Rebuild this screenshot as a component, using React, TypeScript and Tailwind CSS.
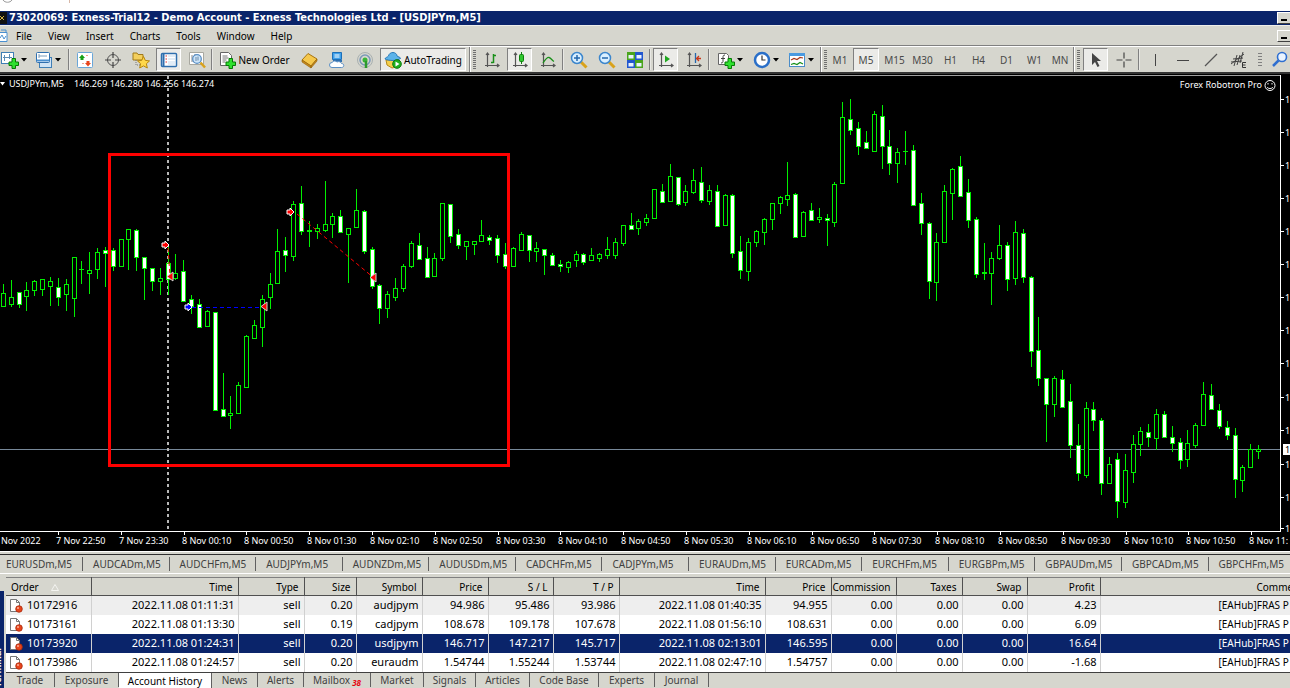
import type { ReactNode } from "react";

// high, body top, body bottom, low, 1 = bearish (filled)
const candles: number[][] = [
  [284, 293, 306, 306, 0], [280, 297, 304, 306, 0], [292, 292, 304, 307, 1], [282, 290, 296, 310, 0],
  [280, 281, 290, 295, 0], [279, 279, 289, 295, 0], [277, 281, 286, 305, 0], [278, 287, 297, 305, 1],
  [279, 284, 294, 310, 0], [257, 257, 298, 316, 0], [261, 269, 269, 283, 0], [252, 270, 273, 293, 0],
  [248, 252, 269, 278, 0], [247, 250, 253, 286, 1], [248, 250, 266, 270, 1], [239, 239, 266, 266, 0],
  [229, 229, 239, 269, 0], [229, 230, 257, 270, 1], [257, 257, 268, 299, 1], [268, 268, 281, 290, 1],
  [268, 278, 281, 294, 0], [247, 263, 279, 294, 1], [254, 273, 278, 279, 0], [260, 271, 301, 301, 1],
  [295, 299, 306, 313, 1], [299, 304, 327, 327, 1], [310, 311, 326, 326, 0], [312, 312, 410, 410, 1],
  [373, 409, 416, 416, 1], [396, 413, 415, 428, 0], [382, 385, 413, 413, 0], [335, 336, 387, 387, 0],
  [320, 325, 338, 338, 0], [295, 299, 327, 346, 0], [273, 284, 297, 308, 0], [229, 251, 283, 283, 0],
  [237, 250, 255, 271, 1], [201, 204, 256, 260, 0], [186, 203, 231, 234, 1], [221, 230, 231, 246, 0],
  [224, 228, 231, 238, 0], [181, 224, 230, 231, 0], [213, 216, 224, 237, 0], [210, 216, 232, 232, 1],
  [228, 228, 234, 282, 0], [189, 210, 227, 227, 0], [210, 211, 251, 253, 1], [247, 249, 286, 288, 1],
  [284, 285, 308, 323, 1], [291, 294, 308, 317, 0], [278, 288, 297, 300, 0], [264, 266, 288, 291, 0],
  [241, 243, 266, 267, 0], [233, 245, 259, 259, 1], [247, 258, 277, 277, 1], [253, 258, 276, 276, 0],
  [203, 203, 258, 260, 0], [204, 204, 236, 242, 1], [229, 234, 245, 248, 1], [241, 241, 246, 259, 0],
  [241, 241, 244, 254, 0], [220, 235, 241, 241, 0], [235, 237, 240, 244, 1], [235, 238, 255, 262, 1],
  [243, 254, 266, 268, 1], [247, 248, 266, 266, 0], [232, 234, 250, 250, 0], [235, 235, 250, 261, 1],
  [242, 248, 251, 261, 0], [249, 249, 255, 274, 1], [253, 255, 265, 265, 1], [260, 264, 266, 271, 1],
  [261, 262, 267, 272, 0], [251, 254, 260, 266, 0], [253, 254, 262, 264, 1], [248, 255, 260, 260, 0],
  [253, 254, 258, 261, 0], [237, 249, 255, 258, 0], [238, 242, 255, 258, 0], [225, 225, 243, 245, 0],
  [213, 225, 229, 229, 1], [219, 221, 228, 234, 0], [214, 218, 222, 225, 0], [189, 189, 218, 218, 0],
  [184, 191, 202, 202, 1], [164, 176, 201, 201, 0], [177, 177, 204, 205, 1], [185, 191, 202, 205, 0],
  [169, 180, 192, 193, 0], [167, 182, 200, 202, 1], [185, 190, 201, 204, 0], [185, 191, 226, 226, 1],
  [194, 195, 225, 225, 0], [194, 195, 253, 257, 1], [236, 251, 270, 278, 1], [238, 242, 271, 280, 0],
  [230, 231, 242, 246, 0], [218, 219, 232, 244, 0], [203, 203, 219, 229, 0], [196, 197, 203, 213, 0],
  [162, 195, 199, 205, 0], [193, 194, 237, 237, 1], [211, 212, 236, 236, 0], [203, 210, 220, 220, 1],
  [208, 217, 219, 222, 0], [214, 218, 220, 245, 1], [182, 184, 222, 226, 0], [102, 117, 183, 183, 0],
  [99, 119, 130, 134, 1], [122, 128, 146, 154, 1], [131, 142, 148, 148, 1], [111, 114, 151, 151, 0],
  [105, 116, 146, 168, 1], [130, 146, 163, 174, 1], [148, 152, 163, 182, 0], [131, 151, 151, 164, 0],
  [145, 150, 205, 205, 1], [193, 203, 223, 234, 1], [222, 223, 281, 298, 1], [233, 242, 282, 300, 0],
  [185, 191, 242, 242, 0], [168, 169, 193, 219, 0], [156, 166, 196, 196, 1], [179, 192, 220, 227, 1],
  [217, 219, 274, 277, 1], [243, 272, 273, 279, 0], [252, 258, 273, 304, 0], [225, 245, 258, 259, 0],
  [242, 245, 279, 290, 1], [221, 232, 278, 284, 0], [229, 233, 277, 282, 1], [276, 277, 351, 366, 1],
  [317, 350, 378, 385, 1], [378, 378, 404, 441, 1], [376, 378, 404, 416, 0], [370, 379, 407, 407, 1],
  [384, 401, 445, 457, 1], [424, 445, 473, 480, 1], [402, 408, 475, 477, 0], [402, 409, 420, 430, 1],
  [418, 420, 483, 494, 1], [457, 464, 483, 483, 0], [453, 459, 501, 517, 1], [454, 470, 502, 507, 0],
  [435, 444, 472, 482, 0], [427, 431, 444, 455, 0], [424, 432, 437, 446, 1], [409, 414, 438, 449, 0],
  [411, 414, 437, 437, 1], [426, 437, 443, 451, 1], [438, 442, 460, 468, 1], [430, 443, 459, 466, 0],
  [423, 425, 445, 447, 0], [382, 394, 425, 425, 0], [384, 395, 409, 409, 1], [404, 410, 426, 428, 1],
  [421, 427, 435, 439, 1], [428, 435, 479, 497, 1], [465, 467, 480, 491, 0], [444, 449, 467, 467, 0],
  [445, 449, 451, 458, 0],
];

const times = [
  "7 Nov 22:50", "7 Nov 23:30", "8 Nov 00:10", "8 Nov 00:50", "8 Nov 01:30", "8 Nov 02:10", "8 Nov 02:50",
  "8 Nov 03:30", "8 Nov 04:10", "8 Nov 04:50", "8 Nov 05:30", "8 Nov 06:10", "8 Nov 06:50", "8 Nov 07:30",
  "8 Nov 08:10", "8 Nov 08:50", "8 Nov 09:30", "8 Nov 10:10", "8 Nov 10:50", "8 Nov 11:",
];

const priceTicks = [99, 132, 165, 198, 231, 264, 297, 330, 363, 397, 430, 464, 497, 528];

const symbols = [
  "EURUSDm,M5", "AUDCADm,M5", "AUDCHFm,M5", "AUDJPYm,M5", "AUDNZDm,M5", "AUDUSDm,M5", "CADCHFm,M5", "CADJPYm,M5",
  "EURAUDm,M5", "EURCADm,M5", "EURCHFm,M5", "EURGBPm,M5", "GBPAUDm,M5", "GBPCADm,M5", "GBPCHFm,M5",
];

const columns = [
  { label: "Order", width: "w-[85px]" },
  { label: "Time", width: "w-[147px]" },
  { label: "Type", width: "w-[66px]" },
  { label: "Size", width: "w-[52px]" },
  { label: "Symbol", width: "w-[66px]" },
  { label: "Price", width: "w-[66px]" },
  { label: "S / L", width: "w-[65px]" },
  { label: "T / P", width: "w-[66px]" },
  { label: "Time", width: "w-[146px]" },
  { label: "Price", width: "w-[66px]" },
  { label: "Commission", width: "w-[65px]" },
  { label: "Taxes", width: "w-[66px]" },
  { label: "Swap", width: "w-[65px]" },
  { label: "Profit", width: "w-[73px]" },
];

const orders = [
  ["10172916", "2022.11.08 01:11:31", "sell", "0.20", "audjpym", "94.986", "95.486", "93.986", "2022.11.08 01:40:35", "94.955", "0.00", "0.00", "0.00", "4.23"],
  ["10173161", "2022.11.08 01:13:30", "sell", "0.19", "cadjpym", "108.678", "109.178", "107.678", "2022.11.08 01:56:10", "108.631", "0.00", "0.00", "0.00", "6.09"],
  ["10173920", "2022.11.08 01:24:31", "sell", "0.20", "usdjpym", "146.717", "147.217", "145.717", "2022.11.08 02:13:01", "146.595", "0.00", "0.00", "0.00", "16.64"],
  ["10173986", "2022.11.08 01:24:57", "sell", "0.20", "euraudm", "1.54744", "1.55244", "1.53744", "2022.11.08 02:47:10", "1.54757", "0.00", "0.00", "0.00", "-1.68"],
];

const rowStyles = [
  "bg-[#eeeeee] text-black",
  "bg-white text-black",
  "bg-[#0a246a] text-white",
  "bg-white text-black",
];

const terminalTabs = [
  { label: "Trade", width: "w-[49px]" },
  { label: "Exposure", width: "w-[64px]" },
  { label: "Account History", width: "w-[93px]" },
  { label: "News", width: "w-[46px]" },
  { label: "Alerts", width: "w-[46px]" },
  { label: "Mailbox", width: "w-[67px]" },
  { label: "Market", width: "w-[53px]" },
  { label: "Signals", width: "w-[52px]" },
  { label: "Articles", width: "w-[54px]" },
  { label: "Code Base", width: "w-[69px]" },
  { label: "Experts", width: "w-[56px]" },
  { label: "Journal", width: "w-[54px]" },
];

function Icon({ children }: { children: ReactNode }) {
  return (
    <svg viewBox="0 0 18 18" className="h-[18px] w-[18px] shrink-0" fill="none" aria-hidden="true">
      {children}
    </svg>
  );
}

function Caret() {
  return (
    <svg viewBox="0 0 6 4" className="h-1 w-1.5 shrink-0" aria-hidden="true">
      <path d="M0 0h6L3 3.5z" fill="#000" />
    </svg>
  );
}

function Plus() {
  return (
    <path
      d="M11 7.5h3.500v3.500h3v3.500h-3v3h-3.500v-3h-3v-3.500h3z"
      fill="#2fe02f"
      stroke="#067a06"
      strokeWidth="1"
    />
  );
}

function Axes() {
  return <path d="M4.500 2v14M2 14.500h14M3 4l1.500-2L6 4M14 13l2 1.500-2 1.500" stroke="#555" strokeWidth="1.200" />;
}

function ToolButton({ label, pressed, width, children }: { label: string; pressed?: boolean; width?: string; children: ReactNode }) {
  return (
    <button
      type="button"
      aria-label={label}
      aria-pressed={pressed}
      className={
        (pressed ? "border-t-[#808080] border-l-[#808080] border-r-white border-b-white bg-[#ebebe8] " : "border-transparent ") +
        "flex h-[23px] shrink-0 items-center justify-center gap-0.5 border whitespace-nowrap " +
        (width || "w-[25px]")
      }
    >
      {children}
    </button>
  );
}

function Separator() {
  return <div className="-mx-px h-[21px] w-0.5 shrink-0 border-l border-[#808080] bg-[#e8e8e4]" />;
}

function Grip() {
  return (
    <div className="flex h-full w-[7px] shrink-0 items-center justify-between">
      <div className="h-full w-0.5 border-l border-[#808080] bg-white" />
      <svg viewBox="0 0 3 20" className="h-5 w-[3px]" aria-hidden="true">
        <path d="M1.500 0v20" stroke="#707070" strokeWidth="3" strokeDasharray="1 1" />
      </svg>
    </div>
  );
}

function Toolbar() {
  return (
    <div className="flex h-[26px] items-center gap-[3px] overflow-hidden border-t border-white bg-[#d6d6ce] text-[10px]">
      <ToolButton label="New chart" width="w-[27px]">
        <Icon>
          <rect x="0.500" y="1.500" width="12" height="11" fill="#fff" stroke="#3f7fb5" />
          <path d="M3.500 4v6M8.500 3v5M2 6.500h9" stroke="#5b8db5" />
          <Plus />
        </Icon>
        <Caret />
      </ToolButton>
      <ToolButton label="Profiles" width="w-[36px]">
        <Icon>
          <rect x="4.500" y="6.500" width="12" height="10" fill="#cfe3f5" stroke="#3f7fb5" />
          <rect x="1.500" y="1.500" width="13" height="10" rx="1" fill="#fff" stroke="#2f6fae" />
          <path d="M1.500 9.500h13" stroke="#4a90d0" strokeWidth="2" />
          <path d="M4 3v4M4 5h8" stroke="#7a9cba" />
        </Icon>
        <Caret />
      </ToolButton>
      <Separator />
      <ToolButton label="Market Watch">
        <Icon>
          <rect x="1.500" y="1.500" width="15" height="15" rx="1" fill="#fff" stroke="#6aa6d8" />
          <path d="M3 7l3-3.500L9 7H7.500v2h-3V7z" fill="#15a015" />
          <path d="M9 12l3 3.500 3-3.500h-1.500v-2h-3v2z" fill="#e8451c" />
          <path d="M10.500 4.500h1M6.500 12.500h1" stroke="#e8451c" />
        </Icon>
      </ToolButton>
      <ToolButton label="Data Window">
        <Icon>
          <circle cx="9" cy="9" r="5.500" stroke="#555" />
          <path d="M9 1v6M9 11v6M1 9h6M11 9h6" stroke="#444" strokeWidth="1.200" />
        </Icon>
      </ToolButton>
      <ToolButton label="Navigator">
        <Icon>
          <path d="M1 2h4l1 1.500h5V9H1z" fill="#f3cf5d" stroke="#a07a1a" />
          <path d="M4 9v5h4" stroke="#777" strokeDasharray="1 1" />
          <path d="M11.500 5.500l1.800 3.900 4.200.5-3.100 2.800.9 4.300-3.800-2.100-3.800 2.100.9-4.300L5.500 9.900l4.200-.5z" fill="#ffd84a" stroke="#b8860b" />
        </Icon>
      </ToolButton>
      <ToolButton label="Terminal" pressed>
        <Icon>
          <rect x="1.500" y="2.500" width="15" height="13" rx="1" fill="#fff" stroke="#2f6fae" strokeWidth="1.500" />
          <path d="M3.500 3v12" stroke="#2f6fae" strokeWidth="2" />
          <path d="M5.500 5h1.500M5.500 8h1.500M5.500 11h1.500" stroke="#d33" strokeWidth="1.200" />
          <path d="M8 5h7M8 8h7M8 11h7M8 13h7" stroke="#c5dbef" />
        </Icon>
      </ToolButton>
      <ToolButton label="Strategy Tester">
        <Icon>
          <path d="M1.500 1.500h14v12h-14z" fill="#fff" stroke="#a8a8a0" />
          <path d="M4 4v7M7 3v5" stroke="#888" />
          <circle cx="9" cy="8" r="4.300" fill="#cfe6fa" stroke="#5a8fc4" strokeWidth="1.300" />
          <path d="M8 6v4M10 5.500v4" stroke="#6a8aa8" />
          <path d="M12.500 11.500l4.500 5" stroke="#d9a21b" strokeWidth="2.500" />
        </Icon>
      </ToolButton>
      <Separator />
      <ToolButton label="New Order" width="w-[78px]">
        <Icon>
          <path d="M2.500 1.500h8l3 3v10h-11z" fill="#fff" stroke="#666" />
          <path d="M4.500 5h5M4.500 7h6M4.500 9h4M4.500 11h3" stroke="#777" />
          <Plus />
        </Icon>
        <span>New Order</span>
      </ToolButton>
      <ToolButton label="MetaEditor">
        <Icon>
          <path d="M2 9l6-6.500 9 5.500-6 7z" fill="#f5c84c" stroke="#a8740e" />
          <path d="M2 9v2l9 6v-2zM11 17l6-7V8l-6 7z" fill="#c98a1a" stroke="#8f5f0a" strokeWidth="0.600" />
        </Icon>
      </ToolButton>
      <ToolButton label="MQL5 Community">
        <Icon>
          <path d="M4.500 1.500h9v7h-9z" fill="#3fa0ea" stroke="#1d6fb8" />
          <path d="M6.500 4h5M6.500 6h5" stroke="#fff" />
          <path d="M5 10h9" stroke="#2f6fae" strokeWidth="2" />
          <path d="M4 16.500a2.500 2.500 0 010-5c1.500-2 4-1.800 5-.5 2-1 4 0 4.500 1.500 3 0 3 4 0 4z" fill="#fff" stroke="#5a8fc4" />
        </Icon>
      </ToolButton>
      <ToolButton label="VPS">
        <Icon>
          <circle cx="9" cy="9" r="7.500" stroke="#a8b0b0" />
          <circle cx="9" cy="9" r="5" stroke="#7a98b8" strokeWidth="1.500" />
          <circle cx="9" cy="9" r="2.500" fill="#38b538" />
          <path d="M10 10v7" stroke="#2c9a2c" strokeWidth="2.500" />
        </Icon>
      </ToolButton>
      <ToolButton label="AutoTrading" pressed width="w-[86px]">
        <Icon>
          <path d="M2 9h13l-1.500 6.500L8 17 3 14z" fill="#f5cf4c" stroke="#b58a1a" />
          <path d="M1 8c0-1.500 3-2 3.500-3C5 2.500 7 1.500 9 1.500S13 3 13 5c1 1 3.500 1 3.500 2.500C13 10 5 10 1 8z" fill="#5cb3ea" stroke="#2a7ab8" />
          <circle cx="13" cy="13" r="4.300" fill="#1fb01f" stroke="#0b7a0b" />
          <path d="M11.500 10.500v5l4-2.500z" fill="#fff" />
        </Icon>
        <span>AutoTrading</span>
      </ToolButton>
      <Grip />
      <ToolButton label="Bar Chart">
        <Icon>
          <Axes />
          <path d="M10.500 3v9M8 11.500h2.500M10.500 4.500H13" stroke="#189018" strokeWidth="1.500" />
        </Icon>
      </ToolButton>
      <ToolButton label="Candlesticks" pressed>
        <Icon>
          <Axes />
          <path d="M10.500 1v12" stroke="#0d800d" />
          <rect x="8.500" y="3.500" width="4" height="7" rx="1" fill="#2fc72f" stroke="#0d800d" />
        </Icon>
      </ToolButton>
      <ToolButton label="Line Chart">
        <Icon>
          <Axes />
          <path d="M4 12c2-3 4-6 6-5.500s3 3 5 4" stroke="#189018" strokeWidth="1.300" />
        </Icon>
      </ToolButton>
      <Separator />
      <ToolButton label="Zoom In">
        <Icon>
          <path d="M11 11l5.500 5.500" stroke="#d9a21b" strokeWidth="3" />
          <circle cx="7" cy="7" r="5.500" fill="#d9efff" stroke="#3c86cc" strokeWidth="1.500" />
          <path d="M4 7h6M7 4v6" stroke="#2468ad" strokeWidth="1.500" />
        </Icon>
      </ToolButton>
      <ToolButton label="Zoom Out">
        <Icon>
          <path d="M11 11l5.500 5.500" stroke="#d9a21b" strokeWidth="3" />
          <circle cx="7" cy="7" r="5.500" fill="#d9efff" stroke="#3c86cc" strokeWidth="1.500" />
          <path d="M4 7h6" stroke="#2468ad" strokeWidth="1.500" />
        </Icon>
      </ToolButton>
      <ToolButton label="Tile Windows">
        <Icon>
          <path d="M1 1h8v8H1zM9 9h8v8H9z" fill="#4aa51c" />
          <path d="M9 1h8v8H9zM1 9h8v8H1z" fill="#2257cf" />
          <path d="M2.500 4h5v3.500h-5zM10.500 4h5v3.500h-5zM2.500 12h5v3.500h-5zM10.500 12h5v3.500h-5z" fill="#e8f2ff" />
        </Icon>
      </ToolButton>
      <Separator />
      <ToolButton label="Auto Scroll" pressed>
        <Icon>
          <Axes />
          <path d="M8 4.500v7l5-3.500z" fill="#1fa81f" />
        </Icon>
      </ToolButton>
      <ToolButton label="Chart Shift">
        <Icon>
          <Axes />
          <path d="M10.500 2v10" stroke="#2468ad" strokeWidth="1.300" />
          <path d="M16 7.500h-4M14 5l-2.500 2.500L14 10" stroke="#c8371a" strokeWidth="1.300" />
        </Icon>
      </ToolButton>
      <Separator />
      <ToolButton label="Indicators" width="w-[36px]">
        <Icon>
          <path d="M1.500 2.500h8l2 2v9h-10z" fill="#fff" stroke="#666" />
          <path d="M8 4c-2 0-2 1-2 3v3c0 1 0 2-2 2M4 7.500h4" stroke="#444" />
          <Plus />
        </Icon>
        <Caret />
      </ToolButton>
      <ToolButton label="Periods" width="w-[30px]">
        <Icon>
          <circle cx="9" cy="9" r="7" fill="#fff" stroke="#2a6fc8" strokeWidth="2.500" />
          <path d="M9 4.500V9h3.500" stroke="#333" strokeWidth="1.200" />
        </Icon>
        <Caret />
      </ToolButton>
      <ToolButton label="Templates" width="w-[33px]">
        <Icon>
          <rect x="1.500" y="2.500" width="15" height="13" fill="#fff" stroke="#4a8cc8" />
          <path d="M1 3.500h16" stroke="#4a9ae0" strokeWidth="3" />
          <path d="M3 9l3-1.500 3 1 3-2 3 .5" stroke="#a8371a" strokeWidth="1.200" />
          <path d="M3 13.500l3-1 3 1 3-2 3 1.500" stroke="#189018" strokeWidth="1.200" />
        </Icon>
        <Caret />
      </ToolButton>
      <Grip />
      <div className="flex items-center gap-[3px] text-[#4a4a4a]">
        <ToolButton label="M1" width="w-5">M1</ToolButton>
        <ToolButton label="M5" width="w-[26px]" pressed>M5</ToolButton>
        <ToolButton label="M15">M15</ToolButton>
        <ToolButton label="M30">M30</ToolButton>
        <ToolButton label="H1">H1</ToolButton>
        <ToolButton label="H4">H4</ToolButton>
        <ToolButton label="D1">D1</ToolButton>
        <ToolButton label="W1">W1</ToolButton>
        <ToolButton label="MN" width="w-5">MN</ToolButton>
      </div>
      <Grip />
      <ToolButton label="Cursor" pressed>
        <Icon>
          <path d="M5 2v12l3-3 2.500 5 2-1L10 10h4z" fill="#444" />
        </Icon>
      </ToolButton>
      <ToolButton label="Crosshair">
        <Icon>
          <path d="M9 1.500v6M9 10.500v6M1.500 9h6M10.500 9h6" stroke="#444" strokeWidth="1.200" />
        </Icon>
      </ToolButton>
      <Separator />
      <ToolButton label="Vertical Line">
        <Icon>
          <path d="M9.500 3v12" stroke="#444" />
        </Icon>
      </ToolButton>
      <ToolButton label="Horizontal Line">
        <Icon>
          <path d="M3 9.500h12" stroke="#444" />
        </Icon>
      </ToolButton>
      <ToolButton label="Trendline">
        <Icon>
          <path d="M3 15L15 3" stroke="#555" strokeWidth="1.200" />
        </Icon>
      </ToolButton>
      <ToolButton label="Equidistant Channel">
        <Icon>
          <path d="M1 13L14 3M3 8l10-1M1 11l11-1M4 15L7 4M7 14l3-10M10 12l3-11" stroke="#444" />
          <path d="M16 11.500h-3.500v5H16M12.500 14h3" stroke="#333" />
        </Icon>
      </ToolButton>
      <svg viewBox="0 0 10 14" className="h-3.5 w-2.5 shrink-0" aria-hidden="true">
        <path d="M6 0v14" stroke="#808080" strokeWidth="4" strokeDasharray="1 2" />
      </svg>
      <ToolButton label="Search">
        <Icon>
          <circle cx="11" cy="6" r="4.500" fill="#eaf4ff" stroke="#2f6fd0" strokeWidth="1.600" />
          <path d="M7.500 9.500L2 15" stroke="#2f6fd0" strokeWidth="2.500" />
        </Icon>
      </ToolButton>
    </div>
  );
}

function Entry({ x, y, color }: { x: number; y: number; color: string }) {
  return <path d={`M${x - 3} ${y - 2}h3v-2l4 4-4 4v-2h-3z`} fill={color} stroke="#fff" strokeWidth="1" />;
}

function Exit({ x, y }: { x: number; y: number }) {
  return (
    <>
      <path d={`M${x + 3} ${y - 5}v9l-6-4.500z`} fill="#ff0000" />
      <path d={`M${x + 3} ${y - 5}v9M${x + 3} ${y - 5}l-6 4.500 6 4.500`} fill="none" stroke="#d0d0d0" strokeWidth="1" />
    </>
  );
}

function Chart() {
  return (
    <svg
      viewBox="0 72 1290 479"
      className="block w-full bg-black text-[9px]"
      fill="#fff"
      role="img"
      aria-label="USDJPYm M5 candlestick chart"
    >
      <rect x="0" y="72" width="1290" height="2" fill="#333" />
      <path d="M0 75.500H1281" stroke="#a0a0a0" strokeWidth="1" />
      <path d="M1280.500 75v456M0 531.500H1281" stroke="#fff" strokeWidth="1" fill="none" />

      <path d="M0 449.500H1280" stroke="#778899" />
      <path d="M168 76v455" stroke="#b8b8b8" strokeWidth="2" strokeDasharray="3 3" />

      {candles.map(([high, top, bottom, low, filled], i) => {
        const x = Math.floor(3.4 + i * 7.845);
        const height = bottom - top + 1;
        return (
          <g key={i}>
            <rect x={x} y={high} width="1" height={low - high + 1} fill="#00f000" />
            <rect x={x - 2} y={top} width="5" height={height} fill="#00f000" />
            {height > 2 && <rect x={x - 1} y={top + 1} width="3" height={height - 2} fill={filled ? "#fff" : "#000"} />}
          </g>
        );
      })}

      <path d="M168 248l2 28M297 214l77 64" stroke="#ff0000" strokeDasharray="4 3" />
      <path d="M192 307.500h70" stroke="#0000ff" strokeDasharray="4 3" />
      <Entry x={165} y={245} color="#ff0000" />
      <Exit x={170} y={277} />
      <Entry x={188} y={307} color="#0000ff" />
      <Exit x={264} y={307} />
      <Entry x={290} y={212} color="#ff0000" />
      <Exit x={373} y={278} />
      <rect x="109.500" y="154.500" width="399" height="311" fill="none" stroke="#ff0000" strokeWidth="3" />

      <path d="M0 82h5l-2.500 3.500z" />
      <text x="9" y="87">USDJPYm,M5</text>
      <text x="74" y="87">146.269 146.280 146.256 146.274</text>
      <text x="1262" y="88" textAnchor="end">Forex Robotron Pro</text>
      <g fill="none" stroke="#fff">
        <circle cx="1270" cy="85.500" r="5" />
        <path d="M1267 87c1 2 5 2 6 0M1268 83v1.500M1272 83v1.500" />
      </g>

      <text x="1" y="544">Nov 2022</text>
      {times.map((time, i) => {
        const x = Math.round(58 + i * 62.8);
        return (
          <g key={time}>
            <path d={`M${x + 0.5} 532v3`} stroke="#fff" />
            <text x={x - 2} y="544">{time}</text>
          </g>
        );
      })}
      {priceTicks.map((y) => (
        <g key={y}>
          <path d={`M1281 ${y + 0.5}h3`} stroke="#fff" />
          <text x="1285" y={y + 4}>1</text>
        </g>
      ))}
      <rect x="1283" y="444" width="7" height="11" />
      <text x="1285" y="453" fill="#000">1</text>
    </svg>
  );
}

function WindowButton() {
  return (
    <button
      type="button"
      aria-label="Minimize"
      className="flex h-3 w-[13px] items-end justify-center border-t border-b border-l border-t-white border-b-[#404040] border-l-white bg-[#d6d6ce] pb-0.5"
    >
      <span className="h-0.5 w-1.5 bg-black" />
    </button>
  );
}

function OrderIcon() {
  return (
    <svg viewBox="0 0 14 15" className="h-[15px] w-3.5 shrink-0" aria-hidden="true">
      <path d="M1.500 1.500h6l3 3v9h-9z" fill="#fff" stroke="#777" />
      <path d="M7.500 1.500v3h3" fill="none" stroke="#777" />
      <circle cx="10" cy="11" r="3.300" fill="#e8451c" stroke="#a82a0c" strokeWidth="0.800" />
      <circle cx="9" cy="10" r="1" fill="#ffb09a" />
    </svg>
  );
}

function HistoryTable() {
  return (
    <table className="w-full table-fixed border-collapse">
      <thead>
        <tr className="h-[18px] bg-[#d6d6ce] text-[10px]">
          {columns.map(({ label, width }, i) => (
            <th
              key={i}
              className={
                width +
                " border-t border-r border-b border-t-[#808080] border-r-[#505050] border-b-[#505050] p-0 font-normal " +
                (i === 0 ? "pl-[5px] text-left" : "pr-[5px] text-right")
              }
            >
              <span>{label}</span>
              {i === 0 && (
                <svg viewBox="0 0 8 7" className="ml-3 inline h-[7px] w-2" aria-hidden="true">
                  <path d="M4 0.500L0.500 6.500h7z" fill="none" stroke="#f4f4f0" />
                </svg>
              )}
            </th>
          ))}
          <th className="overflow-hidden border-t border-b border-t-[#808080] border-b-[#505050] p-0 pl-[156px] text-left font-normal">
            Comme
          </th>
        </tr>
      </thead>
      <tbody>
        {orders.map((order, r) => (
          <tr key={order[0]} className={"h-[19px] " + rowStyles[r]}>
            {order.map((value, i) => (
              <td
                key={i}
                className={"border-r border-[#d0d0d0] p-0 whitespace-nowrap " + (i === 0 ? "pl-[3px]" : "pr-[3px] text-right")}
              >
                {i === 0 ? (
                  <span className="flex items-center gap-1">
                    <OrderIcon />
                    {value}
                  </span>
                ) : (
                  value
                )}
              </td>
            ))}
            <td className="overflow-hidden p-0 pl-[118px] text-[10px] whitespace-nowrap">[EAHub]FRAS P</td>
          </tr>
        ))}
      </tbody>
    </table>
  );
}

function App() {
  return (
    <div className="w-full overflow-hidden bg-[#d6d6ce] font-['Noto_Sans',sans-serif] text-[11px] leading-[14px] text-black">
      <div className="h-[11px] bg-white">
        <svg viewBox="0 0 80 4" className="h-1 w-20" fill="none" aria-hidden="true">
          <path d="M3 0c2 3 7 3 9 0" stroke="#999" />
          <path d="M69.500 0v3" stroke="#d8b8a8" />
        </svg>
      </div>

      <header className="flex h-3.5 items-center justify-between bg-[#0a246a]">
        <div className="flex items-center gap-0.5">
          <svg viewBox="0 0 7 12" className="h-3 w-[7px]" aria-hidden="true">
            <path d="M0 0h7v12H0z" fill="#111" />
            <path d="M0 4l4 4M4 4L0 8" stroke="#d0b040" />
          </svg>
          <h1 className="font-['DejaVu_Sans_Condensed','Noto_Sans',sans-serif] text-[11px] leading-[14px] font-bold text-white">
            73020069: Exness-Trial12 - Demo Account - Exness Technologies Ltd - [USDJPYm,M5]
          </h1>
        </div>
        <WindowButton />
      </header>

      <nav className="flex h-[21px] items-center justify-between border-t border-b border-t-[#eeeeea] border-b-[#808080]">
        <div className="flex items-center gap-4 text-[10px]">
          <svg viewBox="0 0 10 14" className="-mr-2.5 h-3.5 w-2.5" fill="none" aria-hidden="true">
            <path d="M-1 3.500h8v9h-8z" fill="#fff" stroke="#4a90d0" />
            <path d="M1 1h5v2M0 9l2-3 2 4 2-3" stroke="#4a90d0" />
          </svg>
          <button type="button">File</button>
          <button type="button">View</button>
          <button type="button">Insert</button>
          <button type="button">Charts</button>
          <button type="button">Tools</button>
          <button type="button">Window</button>
          <button type="button">Help</button>
        </div>
        <WindowButton />
      </nav>

      <Toolbar />
      <main>
        <Chart />
      </main>

      <div className="h-1 border-t border-b border-t-white border-b-[#303030]" />
      <div className="-mr-[5px] flex h-[18px] items-center text-[10px] text-[#404040]">
        {symbols.map((symbol, i) => (
          <button
            key={symbol}
            type="button"
            className={
              (i === 0 ? "w-[83px] shrink-0 pl-1.5 " : "min-w-0 flex-1 pl-2.5 ") +
              "h-3.5 border-r border-[#606060] text-left whitespace-nowrap"
            }
          >
            {symbol}
          </button>
        ))}
      </div>
      <div className="h-1 border-t border-white" />

      <section className="flex">
        <div className="mt-3.5 mr-0.5 flex w-1 shrink-0 items-end justify-end overflow-hidden bg-[#0a246a]">
          <span className="rotate-180 text-[9px] leading-3 font-bold text-white [writing-mode:vertical-rl]">Terminal</span>
        </div>
        <div className="min-w-0 flex-1">
          <HistoryTable />
          <div className="flex h-4 border-t border-[#404040] text-[10px] text-[#404040]">
            {terminalTabs.map(({ label, width }) => (
              <button
                key={label}
                type="button"
                className={
                  width +
                  (label === "Account History" ? " h-4 bg-white text-black" : " h-3.5") +
                  " shrink-0 border-r border-[#606060] whitespace-nowrap"
                }
              >
                {label}
                {label === "Mailbox" && <sub className="ml-0.5 text-[8px] font-bold text-red-600 italic">38</sub>}
              </button>
            ))}
          </div>
        </div>
      </section>
    </div>
  );
}

export default App;
